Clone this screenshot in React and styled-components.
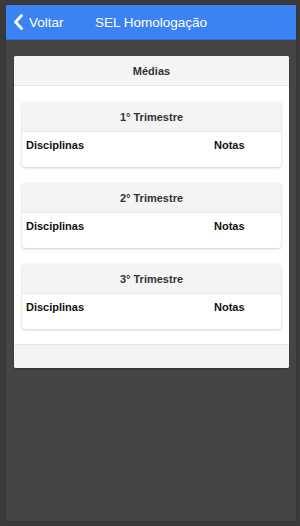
import React from "react";
import styled, { createGlobalStyle } from "styled-components";

const Global = createGlobalStyle`
  html, body { margin: 0; padding: 0; background: #3a3a3a; }
  body { font-family: "Liberation Sans", Arial, sans-serif; }
  * { box-sizing: border-box; }
`;

const Frame = styled.div`
  width: 300px;
  height: 526px;
  padding: 5px 4px 5px 6px;
  background: #3a3a3a;
`;

const Screen = styled.div`
  height: 100%;
  background: #454545;
  display: flex;
  flex-direction: column;
  box-shadow: 0 0 1px rgba(0,0,0,0.5);
`;

const Bar = styled.header`
  height: 35px;
  flex: none;
  background: #3b83f3;
  border-bottom: 1px solid #2f6fd6;
  display: grid;
  grid-template-columns: 1fr auto 1fr;
  align-items: center;
  color: #fff;
  font-size: 13.5px;
`;

const Back = styled.div`
  display: flex;
  align-items: center;
  gap: 5px;
  padding-left: 7px;
`;

const Title = styled.div`
  text-align: center;
`;

const Content = styled.main`
  padding: 16px 7px 0 8px;
`;

const Card = styled.section`
  background: #fff;
  border-radius: 2px;
  overflow: hidden;
  box-shadow: 0 1px 2px rgba(0,0,0,0.3);
`;

const CardHead = styled.div`
  height: 30px;
  background: #f4f4f4;
  border-bottom: 1px solid #e6e6e6;
  display: flex;
  align-items: center;
  justify-content: center;
  font-size: 11px;
  font-weight: bold;
  color: #333;
`;

const CardBody = styled.div`
  padding: 16px 8px 15px 8px;
  display: flex;
  flex-direction: column;
  gap: 16px;
`;

const CardFoot = styled.div`
  height: 24px;
  background: #f4f4f4;
  border-top: 1px solid #e6e6e6;
`;

const Term = styled.div`
  background: #fff;
  border-radius: 3px;
  box-shadow: 0 1px 3px rgba(0,0,0,0.18), 0 0 1px rgba(0,0,0,0.12);
  overflow: hidden;
`;

const TermHead = styled(CardHead)`
  border-bottom: 1px solid #e8e8e8;
`;

const Row = styled.div`
  display: grid;
  grid-template-columns: 1fr 63px;
  padding: 6px 4px 15px 4px;
  font-size: 11px;
  font-weight: bold;
  line-height: 14px;
  color: #111;
`;

const Chevron = () => (
  <svg width="11" height="16" viewBox="0 0 11 16">
    <path d="M8.5 1.5 L2.5 8 L8.5 14.5" fill="none" stroke="#fff" strokeWidth="2.8" strokeLinecap="round" strokeLinejoin="round" />
  </svg>
);

const terms = ["1° Trimestre", "2° Trimestre", "3° Trimestre"];

export default function App() {
  return (
    <>
      <Global />
      <Frame>
        <Screen>
          <Bar>
            <Back><Chevron />Voltar</Back>
            <Title>SEL Homologação</Title>
            <div />
          </Bar>
          <Content>
            <Card>
              <CardHead>Médias</CardHead>
              <CardBody>
                {terms.map((t) => (
                  <Term key={t}>
                    <TermHead>{t}</TermHead>
                    <Row>
                      <span>Disciplinas</span>
                      <span>Notas</span>
                    </Row>
                  </Term>
                ))}
              </CardBody>
              <CardFoot />
            </Card>
          </Content>
        </Screen>
      </Frame>
    </>
  );
}
